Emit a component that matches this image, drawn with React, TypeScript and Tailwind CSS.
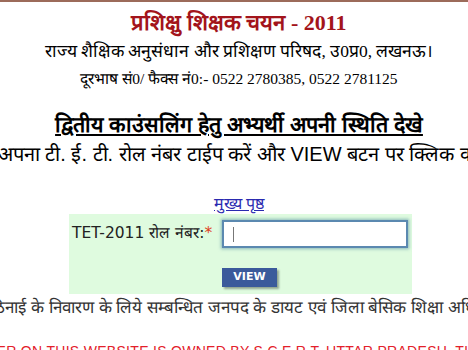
export default function App() {
  return (
    <div className="w-[468px] h-[350px] overflow-hidden bg-white border-t-2 border-[#9c6b5a] pl-[10px] font-['Liberation_Serif',serif]">
      {/* Header */}
      <div className="flex flex-col items-center pt-[7px]">
        <h1 className="text-[22px] leading-[28px] font-bold text-[#a3141b] whitespace-nowrap">
          प्रशिक्षु शिक्षक चयन - 2011
        </h1>
        <p className="text-[17.5px] leading-[28px] text-black whitespace-nowrap">
          राज्य शैक्षिक अनुसंधान और प्रशिक्षण परिषद, उ0प्र0, लखनऊ।
        </p>
        <p className="text-[15.5px] leading-[28px] text-black whitespace-nowrap">
          दूरभाष सं0/ फैक्स नं0:- 0522 2780385, 0522 2781125
        </p>
      </div>

      {/* Instructions */}
      <div className="flex flex-col items-center mt-[18px] font-['Liberation_Sans',sans-serif]">
        <h2 className="text-[21.5px] leading-[28px] font-bold underline text-black whitespace-nowrap">
          द्वितीय काउंसलिंग हेतु अभ्यर्थी अपनी स्थिति देखे
        </h2>
        <div className="flex justify-center w-full">
          <p className="text-[20px] leading-[30px] text-black whitespace-nowrap shrink-0 pr-[46px]">
            कृपया अपना टी. ई. टी. रोल नंबर टाईप करें और VIEW बटन पर क्लिक करें
          </p>
        </div>
      </div>

      <div className="flex justify-center mt-[25px]">
        <a href="#" className="text-[16px] leading-[20px] text-[#2a2ab0] underline">
          मुख्य पृष्ठ
        </a>
      </div>

      {/* Form box */}
      <div className="ml-[59px] w-[343px] h-[80px] bg-[#dffbdf] flex flex-col font-['DejaVu_Sans',sans-serif]">
        <div className="flex items-center pt-[6px]">
          <label className="pl-[3px] w-[150px] text-[15.5px] text-[#222] whitespace-nowrap">
            TET-2011 रोल नंबर:<span className="text-[#e0401a]">*</span>
          </label>
          <div className="ml-[3px] w-[186px] h-[28px] bg-white border-2 border-[#5b89b0] shadow-[0_0_3px_1px_rgba(80,140,160,0.6)] flex items-center pl-[9px]">
            <span className="w-px h-[15px] bg-[#777]" />
          </div>
        </div>
        <div className="pl-[153px] pt-[15px]">
          <button className="w-[55px] h-[19px] bg-[#3b5a9b] text-white text-[11px] font-bold shadow-[2px_2px_2px_rgba(0,0,0,0.35)] font-['DejaVu_Sans',sans-serif]">
            VIEW
          </button>
        </div>
      </div>

      {/* Footer notes */}
      <div className="flex justify-center mt-[1px] font-['Liberation_Sans',sans-serif]">
        <p className="text-[17px] leading-[26px] text-[#333] whitespace-nowrap shrink-0 pl-[30px]">
          किसी भी कठिनाई के निवारण के लिये सम्बन्धित जनपद के डायट एवं जिला बेसिक शिक्षा अधिकारी से सम्पर्क करें
        </p>
      </div>
      <div className="flex justify-center mt-[22px] font-['Liberation_Sans',sans-serif]">
        <p className="text-[14px] leading-[16px] text-[#e3202a] tracking-[0.3px] whitespace-nowrap shrink-0 pr-[14px]">
          THE MATTER ON THIS WEBSITE IS OWNED BY S.C.E.R.T. UTTAR PRADESH. THE SITE IS
        </p>
      </div>
    </div>
  );
}
